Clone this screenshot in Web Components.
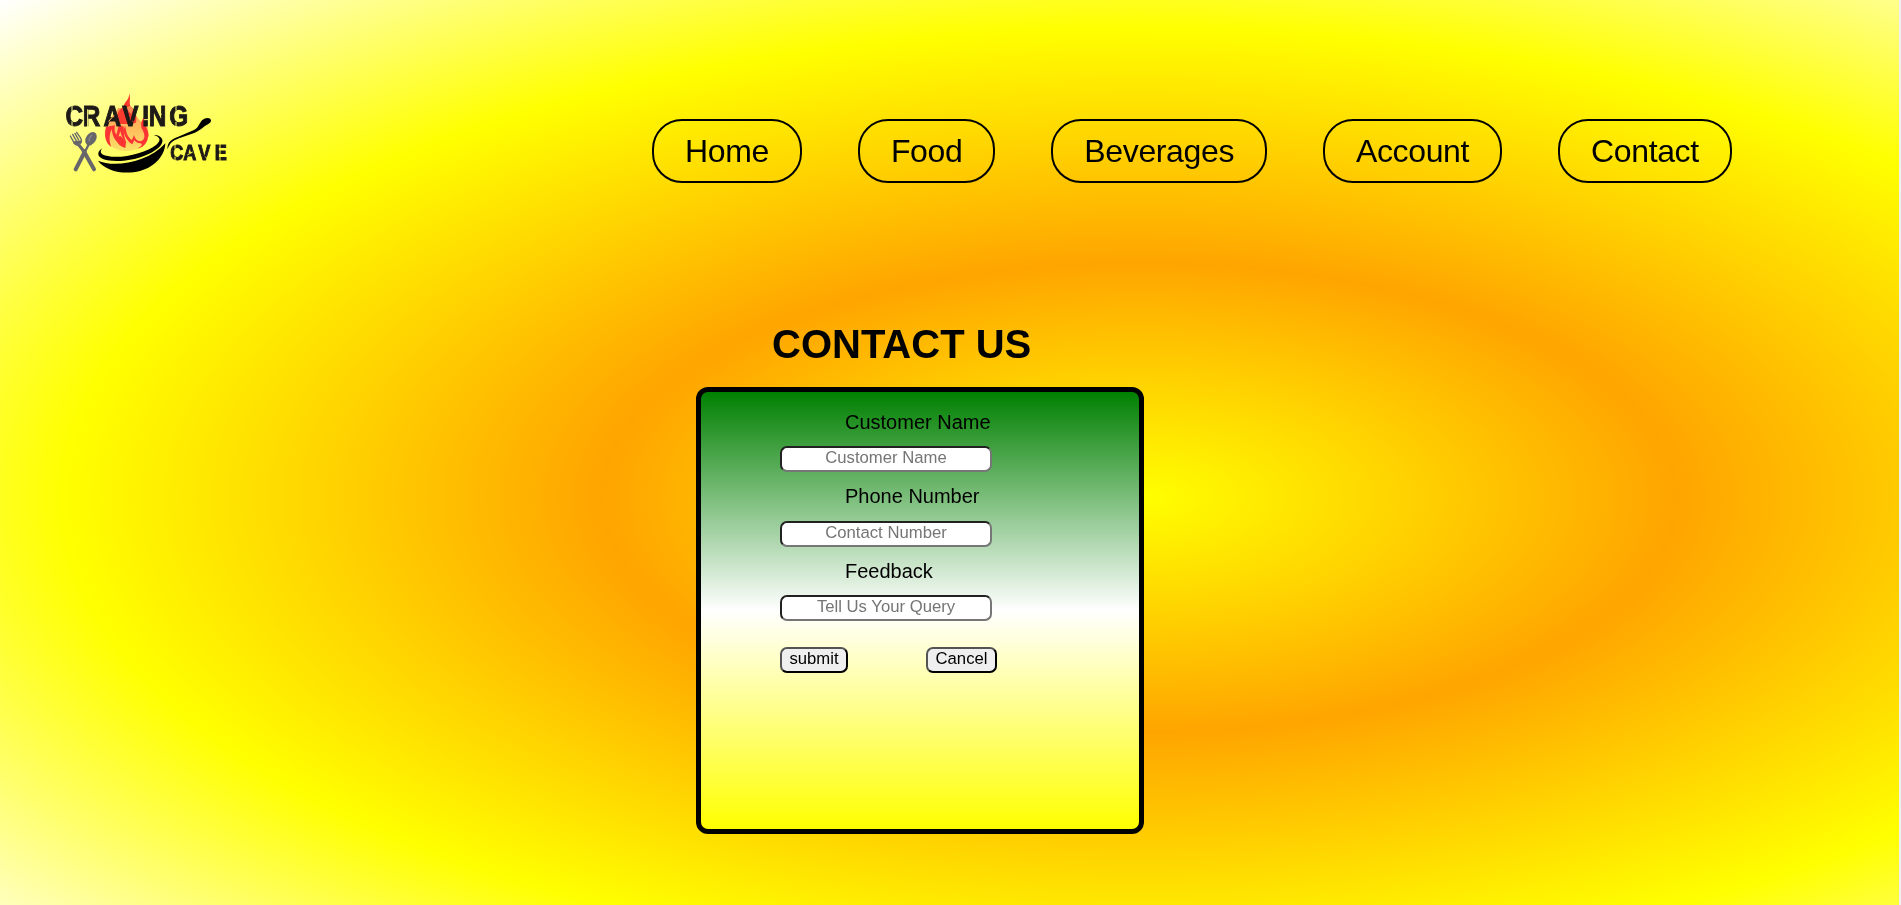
<!DOCTYPE html>
<html lang="en">
<head>
<meta charset="utf-8">
<title>Craving Cave</title>
<style>
html, body { margin: 0; height: 100%; background: #efefef; }
body { overflow: hidden; font-family: Arial, "Liberation Sans", sans-serif; }
</style>
</head>
<body>
<cave-page>
  <cave-header slot="header">
    <cave-logo slot="logo"></cave-logo>
    <nav-pill>Home</nav-pill>
    <nav-pill>Food</nav-pill>
    <nav-pill>Beverages</nav-pill>
    <nav-pill>Account</nav-pill>
    <nav-pill>Contact</nav-pill>
  </cave-header>
  <contact-form heading="CONTACT US">
    <form-field label="Customer Name" hint="Customer Name"></form-field>
    <form-field label="Phone Number" hint="Contact Number"></form-field>
    <form-field label="Feedback" hint="Tell Us Your Query"></form-field>
    <form-button slot="actions" style="width:68px">submit</form-button>
    <form-button slot="actions" style="width:71px">Cancel</form-button>
  </contact-form>
</cave-page>
<script>
const define = (name, html) => customElements.define(name, class extends HTMLElement {
  constructor() {
    super();
    this.attachShadow({ mode: 'open' }).innerHTML = typeof html === 'function' ? html(this) : html;
  }
});

define('cave-page', `
<style>
:host { display: flex; flex-direction: column; width: calc(100% - 2px); height: 905px; overflow: hidden;
  background: radial-gradient(farthest-corner at 60% 55%, yellow, orange, yellow, white); }
</style>
<slot name="header"></slot><slot></slot>`);

define('cave-header', `
<style>
:host { display: flex; height: 190px; flex: none; padding: 80px 0 0 50px; box-sizing: border-box; }
nav { display: flex; gap: 56px; margin-left: 402px; padding-top: 39px; align-items: flex-start; }
</style>
<slot name="logo"></slot><nav><slot></slot></nav>`);

define('nav-pill', `
<style>
:host { display: block; box-sizing: border-box; height: 64px; padding: 12px 31px; border: 2px solid #000;
  border-radius: 30px; font-size: 32px; line-height: 36px; letter-spacing: -0.37px; color: #000; white-space: nowrap; }
</style>
<slot></slot>`);

define('contact-form', el => `
<style>
:host { display: block; padding: 131px 0 0 696px; }
h1 { margin: 0 0 20px 76px; font-size: 40px; line-height: 46px; }
section { box-sizing: border-box; width: 448px; height: 447px; border: 5px solid #000; border-radius: 12px;
  padding: 18.6px 0 0 79px; background: linear-gradient(green, white, yellow); }
.actions { display: flex; gap: 78px; margin-top: 12.6px; }
</style>
<h1>${el.getAttribute('heading')}</h1>
<section><slot></slot><div class="actions"><slot name="actions"></slot></div></section>`);

define('form-field', el => `
<style>
:host { display: block; height: 74.5px; }
label { display: block; margin-left: 65px; font-size: 20px; line-height: 23px; }
input { display: block; box-sizing: border-box; width: 212px; height: 26.4px; margin: 12.5px 0 0;
  border: 2px inset #767676; border-radius: 7px; padding: 0 2px 2px; background: #fff;
  font: 16.7px Arial, "Liberation Sans", sans-serif; text-align: center; }
</style>
<label>${el.getAttribute('label')}</label>
<input placeholder="${el.getAttribute('hint')}">`);

define('form-button', `
<style>
:host { display: block; }
button { display: block; box-sizing: border-box; width: 100%; height: 26px; padding: 0 0 2px; border: 2px outset #000;
  border-radius: 7px; background: #efefef; color: #000; font: 16.7px/20px Arial, "Liberation Sans", sans-serif; }
</style>
<button type="button"><slot></slot></button>`);

define('cave-logo', `
<style>
:host { display: block; width: 200px; height: 110px; }
svg { display: block; }
text { font-family: Arial, "Liberation Sans", sans-serif; font-weight: bold; }
</style>
<svg width="200" height="110" viewBox="0 0 600 330">
  <defs>
    <linearGradient id="glow" x1="0" y1="0" x2="0" y2="1">
      <stop offset="0" stop-color="#ff9a52"/><stop offset=".55" stop-color="#ffc15e"/><stop offset="1" stop-color="#f9e268"/>
    </linearGradient>
    <mask id="stencil" maskUnits="userSpaceOnUse" x="0" y="0" width="600" height="330">
      <rect width="600" height="330" fill="#fff"/>
      <path d="M66 70V94M66 124V150M113 88V148M176 124L192 106M247 122L262 140M278 119H300M320 76L334 104M378 70V92M378 126V150M375 188V206M375 230V250M412 225L428 216M466 230L480 246M510 188V250" stroke="#000" stroke-width="3"/>
    </mask>
  </defs>
  <!-- flame -->
  <path d="M166 140C158 178 178 212 230 213C282 212 300 180 294 142L270 122L245 90L205 84L180 118Z" fill="url(#glow)"/>
  <path d="M238 40C243 56 236 68 242 80C254 88 262 100 258 128L236 132L210 132L200 122C198 104 206 88 221 80C222 66 238 60 238 40Z" fill="#fb3b2e"/>
  <path d="M222 84L240 78L250 88L244 102L232 90Z" fill="#ff8a50"/>
  <g fill="#fb3333">
    <path d="M169 140C160 168 168 190 184 201C177 186 177 164 185 148C187 164 191 176 201 185L211 153C214 166 218 179 229 189C223 174 220 158 221 139L206 138L199 164C193 156 193 147 195 136Z"/>
    <path d="M226 138C228 158 233 172 246 180L252 165C255 176 261 183 271 184C284 181 287 168 278 151L290 149C302 178 285 202 263 205C276 199 278 193 272 190C262 190 256 185 253 180L247 193C233 185 226 173 219 151Z"/>
    <path d="M197 170C198 186 208 199 226 204L228 186L212 168Z"/>
    <path d="M284 110C276 130 298 148 296 171L287 158L276 148C270 132 274 120 284 110Z"/>
  </g>
  <!-- fork and spoon -->
  <g fill="none" stroke="#66666b" stroke-linecap="round">
    <path d="M61 168L72 188Q80 201 90 192Q98 184 91 173L80 157M68 163L80 184M75 160L86 180" stroke-width="4"/>
    <path d="M74 188L90 186M84 192L101 213" stroke-width="9"/>
    <path d="M101 213L132 268" stroke-width="12"/>
    <path d="M117 192L106 213" stroke-width="7"/>
    <path d="M104 216L77 268" stroke-width="12"/>
  </g>
  <ellipse cx="123" cy="176" rx="15" ry="22" transform="rotate(32 123 176)" fill="#66666b"/>
  <path d="M118 184Q116 174 126 165" fill="none" stroke="#88888c" stroke-width="4"/>
  <!-- pan -->
  <path d="M157 205C142 214 139 229 159 237C196 250 260 241 304 218C338 200 347 178 327 168Q320 164 311 165C330 170 335 181 319 194C292 216 229 234 184 230C154 227 146 218 157 205Z"/>
  <path d="M144 242C190 263 292 250 346 190C345 225 316 261 270 273C220 286 166 272 144 242Z"/>
  <path d="M353 208C350 191 361 179 383 171L432 150C446 143 447 130 457 120C467 111 482 112 483 121C484 130 471 133 461 141C449 151 440 157 424 162L387 175C369 182 359 189 353 208Z"/>
  <!-- lettering -->
  <g fill="#1d1a17" stroke="#1d1a17" stroke-width="3" mask="url(#stencil)">
    <text transform="translate(0 139.5) scale(.83 1)" font-size="88" x="56 118 193 261 333 357 431" y="0">CRAVING</text>
    <text transform="translate(0 241) scale(.8 1)" font-size="68" x="451 500 556 618" y="0">CAVE</text>
  </g>
</svg>`);
</script>
</body>
</html>
